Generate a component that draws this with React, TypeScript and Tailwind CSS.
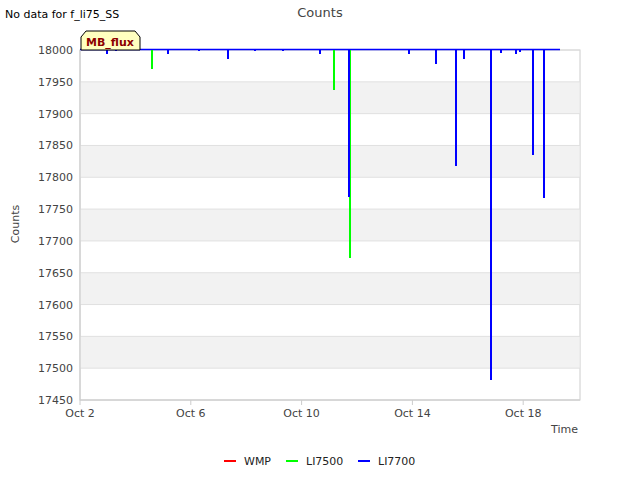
export default function App() {
  const yOf = (v: number) => 50 + ((18000 - v) / 550) * 350;
  const ticks = [18000, 17950, 17900, 17850, 17800, 17750, 17700, 17650, 17600, 17550, 17500, 17450];
  const bands = [17950, 17850, 17750, 17650, 17550];
  const xt = [["Oct 2", 80], ["Oct 6", 190.8], ["Oct 10", 301.6], ["Oct 14", 412.4], ["Oct 18", 523.2]] as const;
  const spikes: [number, number, string][] = [
    [107, 54, "#0000ff"], [116, 51, "#0000ff"], [152, 69, "#00ff00"], [168, 54, "#0000ff"], [199, 51, "#0000ff"],
    [228, 59, "#0000ff"], [255, 51, "#0000ff"], [283, 51, "#0000ff"], [320, 54, "#0000ff"], [334, 90, "#00ff00"],
    [350, 258, "#00ff00"], [349, 197, "#0000ff"], [409, 54, "#0000ff"], [436, 64, "#0000ff"], [456, 166, "#0000ff"],
    [464, 59, "#0000ff"], [491, 380, "#0000ff"], [501, 53, "#0000ff"], [516, 54, "#0000ff"], [520, 52, "#0000ff"],
    [533, 155, "#0000ff"], [544, 198, "#0000ff"],
  ];
  return (
    <div className="relative w-[640px] h-[480px] bg-white" style={{ fontFamily: "'DejaVu Sans', sans-serif" }}>
      <div className="absolute left-[5px] top-[7px] text-[11px] text-black">No data for f_li75_SS</div>
      <div className="absolute left-0 w-[640px] top-[3px] text-center text-[13px] text-[#444]">Counts</div>
      <svg className="absolute left-0 top-0" width="640" height="480">
        <rect x="80" y="50" width="500" height="350" fill="#fff" stroke="#ccc" />
        {bands.map((b) => (
          <rect key={b} x="80.5" y={yOf(b)} width="499" height={yOf(b - 50) - yOf(b)} fill="#f2f2f2" />
        ))}
        {ticks.map((t) => (
          <g key={t}>
            <line x1="80" x2="580" y1={yOf(t)} y2={yOf(t)} stroke="#e0e0e0" />
            <text x="73" y={yOf(t) + 4} textAnchor="end" fontSize="11" fill="#444">{t}</text>
          </g>
        ))}
        {xt.map(([l, x]) => (
          <g key={l}>
            <line x1={x} x2={x} y1="400" y2="405" stroke="#ccc" />
            <text x={x} y="417" textAnchor="middle" fontSize="11" fill="#444">{l}</text>
          </g>
        ))}
        <line x1="80" x2="580" y1="400" y2="400" stroke="#ccc" />
        <line x1="80" x2="80" y1="50" y2="400" stroke="#ccc" />
        <line x1="80" x2="560" y1="49.5" y2="49.5" stroke="#0000ff" strokeWidth="1.5" />
        {spikes.map(([x, y, c], i) => (
          <line key={i} x1={x} x2={x} y1="50" y2={y} stroke={c} strokeWidth="2" />
        ))}
        <text x="578" y="433" textAnchor="end" fontSize="11" fill="#444">Time</text>
        <text transform="translate(19 224) rotate(-90)" textAnchor="middle" fontSize="11" fill="#444">Counts</text>
        <path d="M81 50 V37 L86 31 H135 L140 37 V50 Z" fill="#ffffc0" stroke="#000" />
        <text x="110" y="46" textAnchor="middle" fontSize="11" fontWeight="bold" fill="#8b0000">MB_flux</text>
        <line x1="224" x2="236" y1="461" y2="461" stroke="#ff0000" strokeWidth="2" />
        <text x="244" y="465" fontSize="11" fill="#222">WMP</text>
        <line x1="286" x2="298" y1="461" y2="461" stroke="#00ff00" strokeWidth="2" />
        <text x="306" y="465" fontSize="11" fill="#222">LI7500</text>
        <line x1="358" x2="370" y1="461" y2="461" stroke="#0000ff" strokeWidth="2" />
        <text x="378" y="465" fontSize="11" fill="#222">LI7700</text>
      </svg>
    </div>
  );
}
